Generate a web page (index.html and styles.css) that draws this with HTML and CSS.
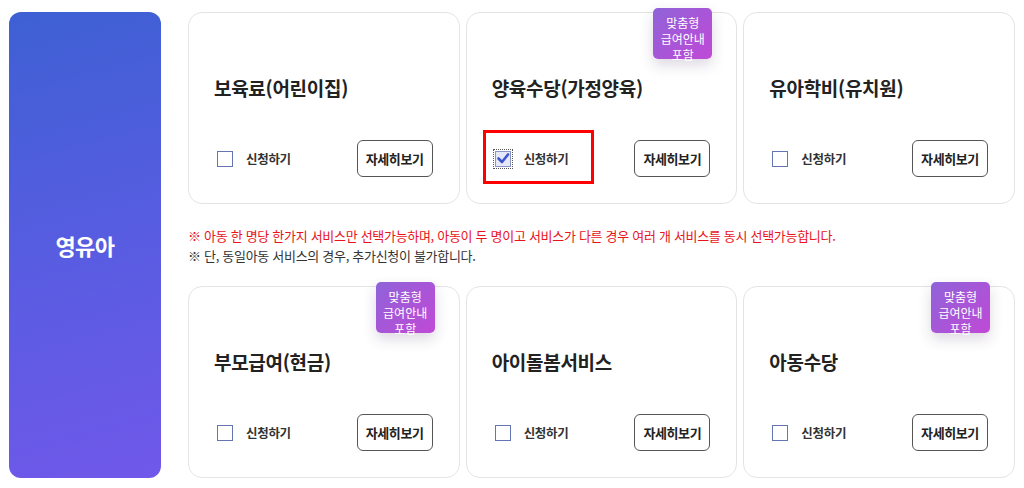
FILE: index.html
```html
<!DOCTYPE html>
<html lang="ko">
<head>
<meta charset="utf-8">
<link rel="stylesheet" href="styles.css">
</head>
<body>
<div class="wrap">
  <div class="side"><span>영유아</span></div>
  <div class="main">
    <div class="grid">
      <div class="card">
        <h3 class="title">보육료(어린이집)</h3>
        <div class="row">
          <label class="chk"><span class="box"></span><span class="lbl">신청하기</span></label>
          <button class="more">자세히보기</button>
        </div>
      </div>
      <div class="card">
        <div class="badge">맞춤형<br>급여안내<br>포함</div>
        <h3 class="title">양육수당(가정양육)</h3>
        <div class="row">
          <label class="chk"><span class="box checked"><svg viewBox="0 0 16 16" width="16" height="16"><path d="M3.5 7.5 L7 11 L13 3.5" fill="none" stroke="#3f55d0" stroke-width="2.6" stroke-linecap="round" stroke-linejoin="round"/></svg></span><span class="lbl">신청하기</span></label>
          <button class="more">자세히보기</button>
        </div>
        <div class="mark"></div>
      </div>
      <div class="card">
        <h3 class="title">유아학비(유치원)</h3>
        <div class="row">
          <label class="chk"><span class="box"></span><span class="lbl">신청하기</span></label>
          <button class="more">자세히보기</button>
        </div>
      </div>
    </div>
    <div class="notes">
      <p class="red">※ 아동 한 명당 한가지 서비스만 선택가능하며, 아동이 두 명이고 서비스가 다른 경우 여러 개 서비스를 동시 선택가능합니다.</p>
      <p>※ 단, 동일아동 서비스의 경우, 추가신청이 불가합니다.</p>
    </div>
    <div class="grid">
      <div class="card">
        <div class="badge">맞춤형<br>급여안내<br>포함</div>
        <h3 class="title">부모급여(현금)</h3>
        <div class="row">
          <label class="chk"><span class="box"></span><span class="lbl">신청하기</span></label>
          <button class="more">자세히보기</button>
        </div>
      </div>
      <div class="card">
        <h3 class="title">아이돌봄서비스</h3>
        <div class="row">
          <label class="chk"><span class="box"></span><span class="lbl">신청하기</span></label>
          <button class="more">자세히보기</button>
        </div>
      </div>
      <div class="card">
        <div class="badge">맞춤형<br>급여안내<br>포함</div>
        <h3 class="title">아동수당</h3>
        <div class="row">
          <label class="chk"><span class="box"></span><span class="lbl">신청하기</span></label>
          <button class="more">자세히보기</button>
        </div>
      </div>
    </div>
  </div>
</div>
</body>
</html>
```
FILE: styles.css
```css
* { box-sizing: border-box; }
html, body { margin: 0; padding: 0; background: #fff; }
body {
  font-family: "Noto Sans CJK KR", "Noto Sans", sans-serif;
  color: #222;
  width: 1024px;
  height: 488px;
  overflow: hidden;
}
.wrap {
  display: flex;
  padding: 12px 9px 10px 9px;
  gap: 27px;
}
.side {
  width: 152px;
  height: 466px;
  border-radius: 12px;
  background: linear-gradient(165deg, #3e60d4 0%, #5a5ce2 55%, #7058ea 100%);
  display: flex;
  align-items: center;
  justify-content: center;
  color: #fff;
  font-size: 22px;
  font-weight: 700;
  letter-spacing: -0.5px;
}
.main {
  flex: 1;
  display: flex;
  flex-direction: column;
}
.grid {
  display: grid;
  grid-template-columns: repeat(3, 1fr);
  column-gap: 6px;
}
.card {
  position: relative;
  height: 192px;
  border: 1px solid #e4e4e4;
  border-radius: 14px;
  background: #fff;
  display: flex;
  flex-direction: column;
  padding: 61px 26px 26px 25px;
}
.title {
  margin: 0;
  font-size: 19px;
  line-height: 28px;
  font-weight: 700;
  letter-spacing: -0.3px;
  color: #222;
}
.row {
  margin-top: auto;
  display: flex;
  align-items: center;
  justify-content: space-between;
  height: 37px;
}
.chk {
  display: flex;
  align-items: center;
  gap: 13px;
  margin-left: 3px;
}
.box {
  width: 16px;
  height: 16px;
  border: 1px solid #6574b3;
  background: #fff;
  display: block;
}
.box.checked {
  border-color: #8a94c4;
  background: #e4e8f8;
  outline: 1px dotted #555;
  outline-offset: 1px;
}
.box svg { display: block; margin: -1px; }
.lbl {
  font-size: 12.5px;
  font-weight: 700;
  color: #333;
  letter-spacing: -0.3px;
}
.more {
  width: 76px;
  height: 37px;
  border: 1px solid #555;
  border-radius: 6px;
  background: #fff;
  font-family: inherit;
  font-size: 13px;
  font-weight: 700;
  color: #222;
  letter-spacing: -0.4px;
  padding: 0;
}
.badge {
  position: absolute;
  top: -5px;
  right: 24px;
  width: 59px;
  height: 51px;
  border-radius: 5px;
  background: linear-gradient(135deg, #8f63d8 0%, #c049d6 100%);
  color: #fff;
  font-size: 12px;
  line-height: 16px;
  text-align: center;
  padding-top: 7px;
  box-shadow: 0 6px 14px rgba(60, 40, 90, 0.18);
}
.mark {
  position: absolute;
  left: 16px;
  top: 117px;
  width: 111px;
  height: 54px;
  border: 3px solid #ff0000;
}
.notes {
  padding: 22px 0 20px 0;
}
.notes p {
  margin: 0;
  font-size: 13px;
  line-height: 20px;
  color: #333;
  letter-spacing: -0.3px;
}
.notes p.red { color: #e8141b; }
```
